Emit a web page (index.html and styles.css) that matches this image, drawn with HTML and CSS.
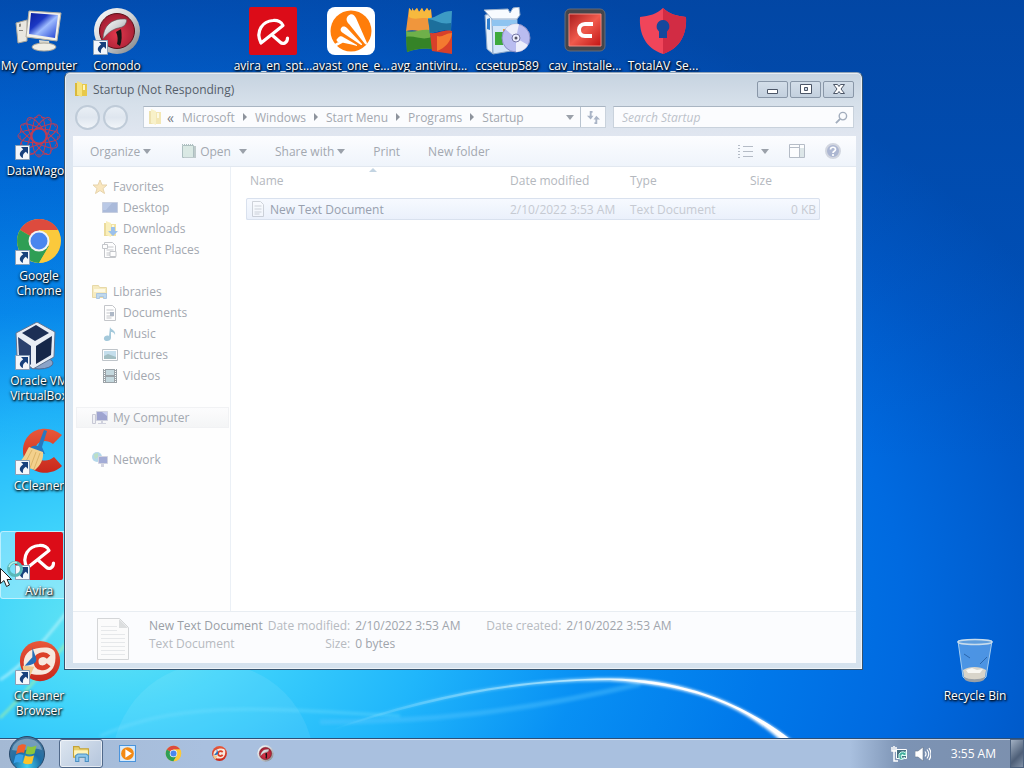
FILE: index.html
```html
<!DOCTYPE html>
<html lang="en">
  <head>
    <meta charset="utf-8">
    <title>Desktop</title>
    <link rel="stylesheet" href="styles.css">
  </head>
  <body>
    <!-- shared icons -->
    <svg class="defs" width="0" height="0" aria-hidden="true">
      <defs>
        <linearGradient id="screen" x1="0" y1="0" x2="1" y2="1">
          <stop offset="0" stop-color="#0a1f9c"/><stop offset=".35" stop-color="#1c38c4"/>
          <stop offset=".55" stop-color="#9fbcff"/><stop offset="1" stop-color="#1e3fd0"/>
        </linearGradient>
        <linearGradient id="silver" x1="0" y1="0" x2="1" y2="1">
          <stop offset="0" stop-color="#ffffff"/><stop offset=".5" stop-color="#d0d2d4"/><stop offset="1" stop-color="#777a7d"/>
        </linearGradient>
        <radialGradient id="darkred" cx=".5" cy=".6" r=".6">
          <stop offset="0" stop-color="#e0384c"/><stop offset="1" stop-color="#a01c32"/>
        </radialGradient>
        <linearGradient id="ccred" x1="0" y1="0" x2="0" y2="1">
          <stop offset="0" stop-color="#e8583a"/><stop offset="1" stop-color="#c8281c"/>
        </linearGradient>
        <radialGradient id="orb" cx=".5" cy=".85" r=".9">
          <stop offset="0" stop-color="#3fd0f4"/><stop offset=".45" stop-color="#1c6ea6"/><stop offset="1" stop-color="#4f7698"/>
        </radialGradient>
        <linearGradient id="cyanred" x1="0" y1="0" x2="1" y2="1">
          <stop offset="0" stop-color="#a81c1c"/><stop offset=".5" stop-color="#f05a4c"/><stop offset="1" stop-color="#c01414"/>
        </linearGradient>
      </defs>
      <symbol id="i-shortcut" viewBox="0 0 15 15">
        <path fill="#f4f7fb" stroke="#8aa0b8" d="M.5.5h14v14H.5z"/>
        <path fill="#17407c" d="M6 2h7v7l-2.200-2.200C8.500 8.500 7.500 10 8 13 4.500 11.500 3 8 8.200 4.200z"/>
      </symbol>
      <symbol id="i-avira" viewBox="0 0 48 48">
        <rect width="48" height="48" rx="2" fill="#dc0c18"/>
        <path fill="none" stroke="#fff" stroke-width="3.200" stroke-linecap="round" stroke-linejoin="round" d="M12 36C6 24 14 14 24 13.500c5-.500 9 2 10 5L12 36M23 28l8 7c3 3 7.500 1 7.500-4"/>
      </symbol>
      <symbol id="i-chrome" viewBox="0 0 48 48">
        <circle cx="24" cy="24" r="22" fill="#fbc93c"/>
        <path fill="#dd4b3e" d="M24 24 5 13C13-1 35-2 43 13H24z"/>
        <path fill="#2f9e55" d="M24 24 5 13C-3 27 6 44 24 46l10-17z"/>
        <path fill="#fbc93c" d="M24 46c17 0 26-18 19-33H24l10 16z"/>
        <circle cx="24" cy="24" r="10.500" fill="#f4f4f4"/>
        <circle cx="24" cy="24" r="8.500" fill="#4a86ee"/>
      </symbol>
      <symbol id="i-comodo" viewBox="0 0 48 48">
        <circle cx="24" cy="24" r="23" fill="url(#silver)"/>
        <circle cx="24" cy="24" r="17.500" fill="url(#darkred)" stroke="#5b1018"/>
        <path fill="#151515" d="M23 25l5-3c1 6 1 12-1 17l-3-2c1-4 1-8-1-12z"/>
        <path fill="url(#silver)" stroke="#555" stroke-width=".6" d="M10 32C10 19 19 11 32 12c2 0 2 2 1 4-2 5-6 4-11 6-5 2-8 5-12 10z"/>
      </symbol>
      <symbol id="i-ccbrowser" viewBox="0 0 48 48">
        <circle cx="24" cy="24" r="21" fill="url(#ccred)"/>
        <path fill="#f7e9de" d="M8 33c-3-11 1-20 12-22 9-2 19-2 20 6 1 11-3 20-13 21-9 1-16-1-19-5z"/>
        <path fill="none" stroke="#dc4028" stroke-width="5" d="M33 20c-5-5-14-2-13 5 0 7 9 8 13 3"/>
        <path fill="#266fb8" d="m16 10 4 11c1 5-3 7-12 8l8-9z"/>
        <path fill="#f0c88a" d="M6 29l12 1-5 11c-5-2-7-7-7-12z"/>
      </symbol>
      <symbol id="i-folder" viewBox="0 0 16 16">
        <path fill="#d9b93c" d="M2 2h5l1 13H2z"/>
        <path fill="#f6e27c" d="M4 0l5 2v14l-5-2z"/>
        <path fill="#e8c94a" d="M9 3h5v12H9z"/>
        <path fill="#fff6bf" d="M10 4h2v5h-2z"/>
      </symbol>
      <symbol id="i-monitor" viewBox="0 0 16 16">
        <path fill="#e9eaf2" stroke="#9a9cb4" d="M.5 4.500h3v9h-3z"/>
        <path fill="#4651a8" stroke="#a9acc4" d="M4.500 1.500h11v9h-11z"/>
        <path fill="#9aa6e8" d="M10 2h5v4z"/>
        <path fill="#a9acc4" d="M9 11h2v2h3v1H6v-1h3z"/>
      </symbol>
      <symbol id="i-page" viewBox="0 0 16 16">
        <path fill="#fff" stroke="#8b9098" d="M2.500.5h8l3 3v12h-11z"/>
        <path stroke="#8b9098" d="M4.500 5h7M4.500 8h7M4.500 11h7M4.500 13h5"/>
      </symbol>
    </svg>

    <div class="desktop">
      <svg class="wallpaper" viewBox="0 0 1024 768" preserveAspectRatio="none" aria-hidden="true">
        <defs>
          <radialGradient id="glow" gradientUnits="userSpaceOnUse" cx="0" cy="0" r="1" gradientTransform="translate(110 620) scale(1060 700)">
            <stop offset="0" stop-color="#66e6f2"/><stop offset=".13" stop-color="#40d4fb"/>
            <stop offset=".3" stop-color="#20b6fb"/><stop offset=".45" stop-color="#0890f4"/>
            <stop offset=".62" stop-color="#0078ea"/><stop offset=".75" stop-color="#006ae0"/><stop offset=".88" stop-color="#005aca"/><stop offset="1" stop-color="#0050b8"/>
          </radialGradient>
          <linearGradient id="shade" x1="0" y1="0" x2="0" y2="1">
            <stop offset="0" stop-color="#063580" stop-opacity=".35"/><stop offset=".6" stop-color="#0048a8" stop-opacity="0"/>
          </linearGradient>
          <linearGradient id="streak" gradientUnits="userSpaceOnUse" x1="330" y1="0" x2="790" y2="0">
            <stop offset="0" stop-color="#bfefff" stop-opacity="0"/><stop offset=".45" stop-color="#bfefff" stop-opacity=".6"/><stop offset=".7" stop-color="#fff"/>
          </linearGradient>
          <filter id="soft"><feGaussianBlur stdDeviation="1.500"/></filter>
        </defs>
        <rect width="1024" height="768" fill="url(#glow)"/>
        <rect width="1024" height="768" fill="url(#shade)"/>
        <circle cx="213" cy="764" r="101" fill="#fff" opacity=".08"/>
        <path fill="none" stroke="#7fe3ff" stroke-width="3" opacity=".35" filter="url(#soft)" d="M100 736C180 700 260 708 400 716"/>
        <path fill="none" stroke="#5cc8ff" stroke-width="5" opacity=".4" filter="url(#soft)" d="M320 722C430 722 520 712 640 684"/>
        <path fill="url(#streak)" filter="url(#soft)" d="M330 730C420 696 520 678 610 678 690 678 750 708 794 742L782 742C740 704 690 685 610 681 520 680 430 698 330 731z"/>
        <path fill="url(#streak)" d="M330 730C420 696 520 678.500 610 678.500 690 679 750 708 791 740L784 740C740 704 690 684 610 680 520 680 430 698 330 731z"/>
        <path fill="none" stroke="#e8ffff" stroke-width="2" opacity=".7" filter="url(#soft)" d="M0 680C25 664 45 640 70 608"/>
        <path fill="none" stroke="#b6f79a" stroke-width="2" opacity=".8" filter="url(#soft)" d="M0 718C30 690 50 660 70 640"/>
      </svg>

      <div class="icons">
        <button class="icon c1 r1">
          <svg viewBox="0 0 48 48"><path fill="#e9e7e0" stroke="#a9a59a" d="M1 16l11-3v21L3 36z"/><path fill="#8a8780" d="M4 17l2-.5v3l-2 .5zM4 23h4v1H4z"/><path fill="#f3f1ea" stroke="#b2aea2" d="M14 4l32 2-4 28-31-4z"/><path fill="url(#screen)" d="M16 6l27 2-3 23-26-4z"/><path fill="#dcd9cf" d="M24 33l10 1 1 6h-10z"/><ellipse cx="29" cy="40" rx="12" ry="4" fill="#f0eee6" stroke="#aaa69a"/></svg>
          <span>My Computer</span>
        </button>
        <button class="icon c2 r1">
          <svg viewBox="0 0 48 48"><use href="#i-comodo"/><use href="#i-shortcut" y="33" width="15" height="15"/></svg>
          <span>Comodo</span>
        </button>
        <button class="icon c4 r1">
          <svg viewBox="0 0 48 48"><use href="#i-avira"/></svg>
          <span>avira_en_spt...</span>
        </button>
        <button class="icon c5 r1">
          <svg viewBox="0 0 48 48"><rect width="48" height="48" rx="8" fill="#fff"/><circle cx="24" cy="24" r="20.500" fill="#ff7d0a"/><path fill="#fff" d="M21 9c3-3 6-2 8 2l11 25c0 1-1 2-2 1L22 17c-3-3-3-6-1-8zM15 20c2-1 4 0 5 1l15 16c0 1 0 1-1 1L16 26c-3-2-3-4-1-6zM11 31c1-2 4-2 5-1l14 8v1c-6-2-12-3-19-4-2-1-2-3 0-4zM6 38l7-4 4 1-9 5z"/></svg>
          <span>avast_one_e...</span>
        </button>
        <button class="icon c6 r1">
          <svg viewBox="0 0 48 48"><path fill="#f0963c" d="M4 1l3 3V1l2 3 3-3 2 4 3-4 2 4 3-4 2 3 2-2 1 8-3 16C14 24 8 22 1 24z"/><path fill="#f7b93e" d="M4 1l3 3V1l2 3 3-3 2 4 3-4 2 4 3-4 2 3 2-2v10C18 9 10 14 4 10z"/><path fill="#3d9bc4" d="M23 11c8 1 12-7 24-7l-1 20c-9-3-13 1-21 2z"/><path fill="#1c6f9c" d="M23 12c8 1 13 6 23 4v8c-9-3-13 1-21 2z"/><path fill="#6fb04a" d="M1 24c9 2 15-2 23-1l5 20c-8-3-18-1-27 2z"/><path fill="#358327" d="M1 30c9-2 16 4 25 0l3 13c-8-3-18-1-27 2z"/><path fill="#d8402a" d="M25 26c9 1 13-4 22-2v23l-20-3z"/><path fill="#f47a30" d="M32 29c5 2 9-3 15-3-1 9-7 15-15 18z"/></svg>
          <span>avg_antiviru...</span>
        </button>
        <button class="icon c7 r1">
          <svg viewBox="0 0 48 48"><path fill="#e8f1fb" stroke="#8aa6c8" d="M2 8l7-1 1 40-6-5z"/><path fill="#d3e6fa" stroke="#8aa6c8" d="M9 11h25v32l-24 4z"/><path fill="#f8fbff" stroke="#9ab0cc" d="M1 3l24-1 2 4 3-5 6-1 1 8-3 4H9z"/><path fill="#8fc4f0" d="M9 13h25v6H9z"/><path fill="#2f7fd0" d="M4 12l3-1v12l-3-1z"/><path fill="#3daa3c" d="M12 25h8v13h-8z"/><path fill="#f0a030" d="M20 22h6v10h-6z"/><circle cx="33" cy="31" r="14" fill="#b9bcf0" stroke="#8b8fc4"/><path fill="#fff" opacity=".75" d="M33 31L22 22c4-5 10-6 14-5zM33 31l12 7c-3 5-8 7-12 7z"/><circle cx="33" cy="31" r="4" fill="#eef" stroke="#7779a8"/><circle cx="33" cy="31" r="1.500" fill="#556"/></svg>
          <span>ccsetup589</span>
        </button>
        <button class="icon c8 r1">
          <svg viewBox="0 0 48 48"><rect x="4" y="2" width="40" height="42" rx="5" fill="#44464c" stroke="#666b76"/><path fill="url(#cyanred)" stroke="#f08a80" d="M8 7h32v32H8z"/><path fill="none" stroke="#fff" stroke-width="4" d="M32 17h-8c-4 0-6 3-6 6s2 6 6 6h7"/></svg>
          <span>cav_installe...</span>
        </button>
        <button class="icon c9 r1">
          <svg viewBox="0 0 48 48"><path fill="#f0455a" d="M24 1c6 6 14 8 23 9 1 16-5 31-23 37C6 41 0 26 1 10 10 9 18 7 24 1z"/><path fill="#d22c44" d="M24 1c6 6 14 8 23 9 1 16-5 31-23 37z"/><path fill="#16489c" d="M24 13a6.500 6.500 0 0 1 4 11.500V31h-8v-6.500A6.500 6.500 0 0 1 24 13z"/></svg>
          <span>TotalAV_Se...</span>
        </button>

        <button class="icon c1 r2">
          <svg viewBox="0 0 48 48"><g fill="none" stroke="#c03c54" stroke-width="1"><ellipse cx="24" cy="24" rx="21" ry="7"/><ellipse cx="24" cy="24" rx="21" ry="7" transform="rotate(30 24 24)"/><ellipse cx="24" cy="24" rx="21" ry="7" transform="rotate(60 24 24)"/><ellipse cx="24" cy="24" rx="21" ry="7" transform="rotate(90 24 24)"/><ellipse cx="24" cy="24" rx="21" ry="7" transform="rotate(120 24 24)"/><ellipse cx="24" cy="24" rx="21" ry="7" transform="rotate(150 24 24)"/><circle cx="24" cy="24" r="8"/><circle cx="24" cy="24" r="19" stroke-dasharray="4 3"/></g><use href="#i-shortcut" y="33" width="15" height="15"/></svg>
          <span>DataWagon</span>
        </button>
        <button class="icon c1 r3">
          <svg viewBox="0 0 48 48"><use href="#i-chrome"/><use href="#i-shortcut" y="33" width="15" height="15"/></svg>
          <span>Google<br>Chrome</span>
        </button>
        <button class="icon c1 r4">
          <svg viewBox="0 0 48 48"><ellipse cx="24" cy="41" rx="14" ry="6" fill="#8ba3c8" stroke="#4f6a94"/><path fill="#e8edf5" stroke="#5e7392" d="M1 11L22 0l18 10-1 25-21 12L2 34z"/><path fill="#1d2f55" d="M7 11l14-8 13 8-14 8z"/><path fill="#2a416e" d="M3 15l13 9v19L4 33z"/><path fill="#162749" d="M21 24l16-10-1 19-15 9z"/><use href="#i-shortcut" y="33" width="15" height="15"/></svg>
          <span>Oracle VM<br>VirtualBox</span>
        </button>
        <button class="icon c1 r5">
          <svg viewBox="0 0 48 48"><path fill="url(#ccred)" d="M47 8C31-5 8 3 8 24c0 20 24 29 39 15l-8-9c-8 7-19 3-19-6 0-10 11-13 18-7z"/><path fill="#2878c0" d="M29 3l3 1-5 16 3 7-15-4c0-4 4-5 8-4z"/><path fill="#f3d08c" d="M14 20l14 5c1 7-3 14-8 18L2 37c6-4 8-10 12-17z"/><path stroke="#dcb468" fill="none" d="M17 23l-8 15M21 25l-6 16M25 26l-6 16"/><use href="#i-shortcut" y="33" width="15" height="15"/></svg>
          <span>CCleaner</span>
        </button>
        <button class="icon selected c1 r6">
          <svg viewBox="0 0 48 48"><use href="#i-avira"/><use href="#i-shortcut" y="33" width="15" height="15"/></svg>
          <span>Avira</span>
        </button>
        <button class="icon c1 r7">
          <svg viewBox="0 0 48 48"><use href="#i-ccbrowser" x="2" width="46" height="48"/><use href="#i-shortcut" y="33" width="15" height="15"/></svg>
          <span>CCleaner<br>Browser</span>
        </button>
        <button class="icon c13 r7">
          <svg viewBox="0 0 48 48"><path fill="#a8d2f6" fill-opacity=".45" stroke="#a4cdf0" d="M7 4l5 36c3 5 20 5 23 0l6-36z"/><path fill="#d8d4ca" d="M12 33c6-4 17-4 23 0l-1 7c-4 4-17 4-21 0z"/><path fill="#f7f6f2" d="M15 33l6-2 5 2 6-1-3 4H17z"/><path fill="#9aa0a6" d="M13 40c5 3 16 3 21 0l-1 3c-5 3-14 3-19 0z"/><path stroke="#2a66ac" fill="none" d="M29 27l7-7M13 17l6 4"/><ellipse cx="24" cy="5" rx="17" ry="2.500" fill="#5f9ede" stroke="#c8dcec" stroke-width="1.500"/></svg>
          <span>Recycle Bin</span>
        </button>
      </div>

      <section class="window">
        <header class="titlebar">
          <svg class="i16" viewBox="0 0 16 16"><use href="#i-folder"/></svg>
          <h1>Startup (Not Responding)</h1>
          <div class="caption">
            <button aria-label="Minimize"><svg viewBox="0 0 14 12"><path fill="#fff" stroke="#4b5566" d="M1.500 6.500h10v4h-10z"/></svg></button>
            <button aria-label="Maximize"><svg viewBox="0 0 14 12"><path fill="#fff" stroke="#4b5566" fill-rule="evenodd" d="M1.500 1.500h11v9h-11zM5.500 4.500v3h3v-3z"/></svg></button>
            <button aria-label="Close"><svg viewBox="0 0 14 12"><path fill="#fff" stroke="#4b5566" d="M1.500 1.500h4L7 3.500l1.500-2h4L9 6l3.500 4.500h-4L7 8.500l-1.500 2h-4L5 6z"/></svg></button>
          </div>
        </header>

        <nav class="navbar">
          <button class="round" aria-label="Back"></button>
          <button class="round" aria-label="Forward"></button>
          <div class="address">
            <svg class="i16 faded" viewBox="0 0 16 16"><use href="#i-folder"/></svg>
            <span class="more">«</span>
            <a href="#">Microsoft</a><i class="tri"></i>
            <a href="#">Windows</a><i class="tri"></i>
            <a href="#">Start Menu</a><i class="tri"></i>
            <a href="#">Programs</a><i class="tri"></i>
            <a href="#">Startup</a>
            <button class="history" aria-label="Previous locations"><i class="down"></i></button>
            <button class="refresh" aria-label="Refresh"><svg viewBox="0 0 16 16"><path fill="none" stroke="#a9b4c6" stroke-width="2" d="M7 2H5v5M9 14h2V9"/><path fill="#a9b4c6" d="M1 6h7l-3 4zM8 10h7l-4-4z"/></svg></button>
          </div>
          <div class="search">
            <input type="text" placeholder="Search Startup" aria-label="Search Startup">
            <svg viewBox="0 0 14 14"><circle cx="8.500" cy="5.500" r="4" fill="none" stroke="#a2adbd" stroke-width="1.500"/><path stroke="#a2adbd" stroke-width="2" d="M5.500 8.500L1 13"/></svg>
          </div>
        </nav>

        <div class="client">
          <div class="toolbar">
            <button class="t-organize">Organize <i class="down"></i></button>
            <button class="t-open"><svg viewBox="0 0 16 16"><path fill="#cfe3da" stroke="#8fa8a8" d="M1.500 2.500h11v12h-11z"/><path stroke="#8fa8a8" stroke-dasharray="1 1" d="M1 1.500h12"/><path fill="#a9b8b8" d="M13 3h2v12H3v-1h10z"/></svg> Open <i class="down"></i></button>
            <button class="t-share">Share with <i class="down"></i></button>
            <button class="t-print">Print</button>
            <button>New folder</button>
            <div class="tools">
              <button aria-label="Change your view"><svg viewBox="0 0 16 16"><path stroke="#9aa3b0" stroke-dasharray="2 1" d="M1 2.500h3M1 5.500h3M1 8.500h3M1 11.500h3M1 14.500h3"/><path stroke="#9aa3b0" d="M6 3.500h10M6 8.500h10M6 13.500h10"/></svg> <i class="down"></i></button>
              <button aria-label="Show the preview pane"><svg viewBox="0 0 16 16"><path fill="#fff" stroke="#9aa3b0" d="M.5 1.500h15v13H.5zM.5 4.500h10M10.500 2v12"/><path fill="#d3dfe0" d="M11 5h4v9h-4z"/></svg></button>
              <button aria-label="Get help"><svg viewBox="0 0 16 16"><circle cx="8" cy="8" r="7" fill="#8f9cc0" stroke="#c3c8d4" stroke-width="2"/><path fill="none" stroke="#fff" stroke-width="1.700" d="M5.500 6.500c0-3 5-3 5 0 0 2-2.500 1.500-2.500 3.500M8 11v2"/></svg></button>
            </div>
          </div>

          <div class="panes">
            <aside class="sidebar">
              <ul>
                <li><a href="#"><svg viewBox="0 0 16 16"><path fill="#f6d080" stroke="#cfa95a" d="M8 1l2 5h5l-4 3.500 1.500 5L8 11.500l-4.500 3 1.500-5L1 6h5z"/></svg>Favorites</a></li>
                <li class="sub"><a href="#"><svg viewBox="0 0 16 16"><path fill="#5878b8" stroke="#8fa0c4" d="M.5 2.500h15v10H.5z"/><path fill="#7896d0" d="M1 3h9L4 10H1z"/></svg>Desktop</a></li>
                <li class="sub"><a href="#"><svg viewBox="0 0 16 16"><use href="#i-folder"/><path fill="#3b86dc" d="M9 6h4v4h3l-5 5-5-5h3z"/></svg>Downloads</a></li>
                <li class="sub"><a href="#"><svg viewBox="0 0 16 16"><use href="#i-page"/><path fill="#fff" stroke="#8b9098" d="M.5 2.500h5v4h-5zM8 9.500h6v5H8z"/></svg>Recent Places</a></li>
              </ul>
              <ul>
                <li><a href="#"><svg viewBox="0 0 16 16"><path fill="#efd983" stroke="#d2b655" d="M.5 1.500h6l1 2h7v10H.5z"/><path fill="#fff6c8" d="M2 5h11v3H2z"/><path fill="#7fb4e0" stroke="#5a8fc4" d="M4.500 14.500v-5h10v5h-3v-2h-4v2z"/></svg>Libraries</a></li>
                <li class="sub"><a href="#"><svg viewBox="0 0 16 16"><use href="#i-page"/><path fill="#607490" d="M8 7h4v4H8z"/></svg>Documents</a></li>
                <li class="sub"><a href="#"><svg viewBox="0 0 16 16"><path fill="#4a94b8" d="M8 1c1 3 6 3 5 8-1-3-3-3-4-3v6c0 4-8 4-7 0 0-2 3-3 5-2z"/></svg>Music</a></li>
                <li class="sub"><a href="#"><svg viewBox="0 0 16 16"><path fill="#fff" stroke="#7f8c96" d="M.5 2.500h15v11H.5z"/><path fill="#8cc0dc" d="M2 4h12v8H2z"/><path fill="#488088" d="M2 12V9l4-2 8 3v2z"/></svg>Pictures</a></li>
                <li class="sub"><a href="#"><svg viewBox="0 0 16 16"><path fill="#3b4a54" d="M1 1h14v14H1z"/><path stroke="#fff" stroke-width="1" stroke-dasharray="1 1" d="M2.500 1v14M13.500 1v14"/><path fill="#8cb4c0" d="M4 2h8v5H4zM4 9h8v5H4z"/></svg>Videos</a></li>
              </ul>
              <ul>
                <li class="current"><a href="#"><svg viewBox="0 0 16 16"><use href="#i-monitor"/></svg>My Computer</a></li>
              </ul>
              <ul>
                <li><a href="#"><svg viewBox="0 0 16 16"><circle cx="5" cy="5" r="5" fill="#6fb4d8"/><path fill="#7cc48c" d="M2 2l4-1v4L3 7z"/><path fill="#4a5cb0" stroke="#a9acc4" d="M6.500 4.500h9v7h-9z"/><path fill="#a9acc4" d="M9 12h3v3H9z"/></svg>Network</a></li>
              </ul>
            </aside>

            <main class="files">
              <table>
                <colgroup><col class="w-name"><col class="w-mid"><col class="w-mid"><col class="w-size"></colgroup>
                <thead>
                  <tr><th class="sorted">Name</th><th>Date modified</th><th>Type</th><th>Size</th></tr>
                </thead>
                <tbody>
                  <tr>
                    <td class="name"><svg viewBox="0 0 16 16"><use href="#i-page"/></svg>New Text Document</td>
                    <td>2/10/2022 3:53 AM</td>
                    <td>Text Document</td>
                    <td class="size">0 KB</td>
                  </tr>
                </tbody>
              </table>
            </main>
          </div>

          <footer class="details">
            <svg viewBox="0 0 32 42"><path fill="#fbfbfb" stroke="#d4d6d8" d="M.5.500h22l9 9v32H.5z"/><path fill="#dcdedf" d="M22 1v9h9z"/><path stroke="#e6e8ea" d="M4 8.500h16M4 12.500h16M4 16.500h24M4 20.500h24M4 24.500h24M4 28.500h24M4 32.500h24M4 36.500h24"/></svg>
            <div class="props">
              <strong>New Text Document</strong>
              <span class="key">Date modified:</span><span class="value">2/10/2022 3:53 AM</span>
              <span class="key">Date created:</span><span class="value">2/10/2022 3:53 AM</span>
              <span>Text Document</span>
              <span class="key">Size:</span><span class="value">0 bytes</span>
            </div>
          </footer>
        </div>
      </section>

      <footer class="taskbar">
        <button class="start" aria-label="Start">
          <svg viewBox="0 0 38 38"><circle cx="19" cy="19" r="17.500" fill="url(#orb)" stroke="#26486a"/><path fill="#fff" opacity=".3" d="M4 15C7 0 31 0 34 15c-10-4-20 3-30 0z"/><path fill="#f0602c" d="M10 11c3-2 6-2 8-1l-2 8c-3-1-5 0-8 1z"/><path fill="#8cc63c" d="M19.500 11c3 1.500 6 1 9-.500l-2 8c-3 1-6 1.500-9 0z"/><path fill="#38a0e8" d="M7.500 20.500c3-1.500 5-1.500 8-.500l-2 8c-3-1-5-1-8 .500z"/><path fill="#fcc42c" d="M17 20.500c3 1.500 6 1 9 0l-2 8c-3 1-6 1-9-.500z"/></svg>
        </button>
        <button class="task active" aria-label="Windows Explorer"><svg viewBox="0 0 16 16"><path fill="#e8cf6a" stroke="#c4a238" d="M.5 1.500h5l1 2h8v8H.5z"/><path fill="#fff4b8" d="M1 5h13v5H1z"/><path fill="#8cc8ee" stroke="#4c90c4" d="M2.500 15.500V10l2-1.500h8l2 1.500v5.500h-3v-4h-6v4z"/></svg></button>
        <button class="task" aria-label="Windows Media Player"><svg viewBox="0 0 16 16"><path fill="#d8ebfc" stroke="#4a94dc" d="M.5.500h15v15H.5z"/><circle cx="8" cy="8" r="6" fill="#f48a14"/><path fill="#fff" d="M6 4l6 4-6 4z"/></svg></button>
        <button class="task" aria-label="Google Chrome"><svg viewBox="0 0 48 48"><use href="#i-chrome"/></svg></button>
        <button class="task" aria-label="CCleaner Browser"><svg viewBox="0 0 48 48"><use href="#i-ccbrowser"/></svg></button>
        <button class="task" aria-label="Comodo"><svg viewBox="0 0 48 48"><use href="#i-comodo"/></svg></button>
        <div class="tray">
          <button aria-label="Network"><svg viewBox="0 0 16 16"><path fill="#456f80" stroke="#fff" d="M5.500 3.500h10v9h-10z"/><path fill="none" stroke="#fff" stroke-width="1.500" d="M1 1v4h4V1M3 0v15h4"/><path fill="#3fae9c" stroke="#d8fff4" d="M8 8.500a4 4 0 0 1 6-2l1-1v4h-4l1-1-2 1 1 3 3-1a4 4 0 0 1-6 1z"/></svg></button>
          <button aria-label="Volume"><svg viewBox="0 0 16 16"><path fill="#fff" stroke="#65758c" stroke-width=".6" d="M0 5h3l5-4v14l-5-4H0z"/><path fill="none" stroke="#fff" stroke-width="1.200" d="M10 5.500q2 2.500 0 5M12 3.500q3.500 4.500 0 9M14 2q4 6 0 12"/></svg></button>
          <time>3:55 AM</time>
          <button class="peek" aria-label="Show desktop"></button>
        </div>
      </footer>

      <svg class="cursor" viewBox="0 0 24 30" aria-hidden="true">
        <circle cx="15" cy="10" r="6.500" fill="none" stroke="#58b8b8" stroke-width="3"/>
        <path fill="none" stroke="#b6efe8" stroke-width="1.500" d="M9 8a6.500 6.500 0 0 1 8-4.500"/>
        <path fill="#fff" stroke="#222" d="M.5 9.500v15l3.500-3 2.500 6 3-1.500-2.500-5.500h4.500z"/>
      </svg>
    </div>
  </body>
</html>
```
FILE: styles.css
```css
* {
  margin: 0;
  padding: 0;
  box-sizing: border-box;
}

body {
  font-family: "Open Sans", "Noto Sans", sans-serif;
  font-size: 12px;
  line-height: 15px;
}

button, input {
  font: inherit;
  color: inherit;
  background: none;
  border: none;
}

a {
  color: inherit;
  text-decoration: none;
}

ul {
  list-style: none;
}

svg {
  display: block;
  flex: none;
}

.defs {
  position: absolute;
}

.desktop {
  position: relative;
  height: 100vh;
  overflow: hidden;
  background: #0068d8;
}

.wallpaper {
  position: absolute;
  width: 100%;
  height: 100%;
}

/* desktop icons */
.icons {
  position: absolute;
  top: 6px;
  left: 0;
  display: grid;
  grid-template-columns: repeat(13, 78px);
  grid-template-rows: repeat(7, 105px);
  align-items: start;
}

.icon {
  display: flex;
  flex-direction: column;
  align-items: center;
  gap: 3px;
  border: 1px solid transparent;
  border-radius: 3px;
  color: #fff;
  text-shadow: 1px 1px 2px #000, 0 1px 3px #000;
}

.icon svg {
  width: 48px;
  height: 48px;
}

.icon span {
  text-align: center;
  white-space: nowrap;
}

.icon.selected {
  background: rgba(255, 255, 255, 0.3);
  border-color: rgba(255, 255, 255, 0.5);
}

.c1 { grid-column: 1; }
.c2 { grid-column: 2; }
.c4 { grid-column: 4; }
.c5 { grid-column: 5; }
.c6 { grid-column: 6; }
.c7 { grid-column: 7; }
.c8 { grid-column: 8; }
.c9 { grid-column: 9; }
.c13 { grid-column: 13; }
.r1 { grid-row: 1; }
.r2 { grid-row: 2; }
.r3 { grid-row: 3; }
.r4 { grid-row: 4; }
.r5 { grid-row: 5; }
.r6 { grid-row: 6; }
.r7 { grid-row: 7; }

/* explorer window */
.window {
  position: absolute;
  left: 64px;
  right: 161px;
  top: 72px;
  bottom: 98px;
  display: flex;
  flex-direction: column;
  padding: 0 6px 6px 8px;
  border: 1px solid #35536f;
  border-top-color: #8fa3b8;
  border-radius: 6px 6px 0 0;
  background: linear-gradient(#c6d3e0, #d6e0ea 30px, #e0e6f0 62px, #dbe7f2 120px, #d5e2ee);
  box-shadow: inset 0 0 0 1px rgba(255, 255, 255, 0.6);
  color: #a3a8b0;
}

.titlebar {
  display: flex;
  align-items: center;
  height: 32px;
  gap: 4px;
}

.titlebar h1 {
  flex: 1;
  font-size: 12px;
  font-weight: normal;
  color: #555e6a;
}

.i16 {
  width: 16px;
  height: 16px;
}

.faded {
  opacity: 0.4;
}

.caption {
  display: flex;
  gap: 2px;
  padding-right: 2px;
}

.caption button {
  display: flex;
  align-items: center;
  justify-content: center;
  width: 31px;
  height: 17px;
  border: 1px solid #8997a8;
  border-radius: 2px;
  background: linear-gradient(#d3dee9, #c3d0de);
}

.caption svg {
  width: 14px;
  height: 12px;
}

.navbar {
  display: flex;
  align-items: center;
  gap: 3px;
  height: 24px;
  padding: 0 2px;
}

.round {
  width: 25px;
  height: 25px;
  border: 2px solid #bfcbd8;
  border-radius: 50%;
  background: linear-gradient(#e9eff5, #dfe6ef 50%, #f1f5f9);
}

.address {
  display: flex;
  align-items: center;
  flex: 1;
  height: 22px;
  margin-left: 12px;
  padding-left: 3px;
  border: 1px solid #c9d2dc;
  border-top-color: #a9b5c2;
  background: #fbfcfe;
}

.more {
  padding: 0 8px 0 4px;
  font-size: 14px;
  color: #777d86;
}

.tri {
  margin: 0 8px;
  border: solid transparent;
  border-width: 4px 0 4px 4px;
  border-left-color: #8d939c;
}

.down {
  display: inline-block;
  border: solid transparent;
  border-width: 5px 4px 0;
  border-top-color: #9ba1aa;
}

.history {
  display: flex;
  align-items: center;
  justify-content: center;
  margin-left: auto;
  width: 20px;
  height: 100%;
}

.refresh {
  display: flex;
  align-items: center;
  justify-content: center;
  width: 25px;
  height: 100%;
  border-left: 1px solid #b9c4d0;
}

.refresh svg {
  width: 15px;
  height: 15px;
}

.search {
  display: flex;
  align-items: center;
  width: 241px;
  height: 22px;
  margin-left: 4px;
  padding: 0 5px 0 8px;
  border: 1px solid #c9d2dc;
  border-top-color: #a9b5c2;
  background: #fbfcfe;
}

.search input {
  flex: 1;
  min-width: 0;
  outline: none;
}

.search input::placeholder {
  font-style: italic;
  color: #bcc2ca;
}

.search svg {
  width: 13px;
  height: 13px;
}

.client {
  display: flex;
  flex-direction: column;
  flex: 1;
  min-height: 0;
  margin-top: 7px;
  background: #fff;
}

.toolbar {
  display: flex;
  align-items: center;
  height: 31px;
  padding: 0 15px 0 17px;
  border-bottom: 1px solid #e2e8f0;
  background: linear-gradient(#fcfdff, #eff4fb);
}

.toolbar button {
  display: flex;
  align-items: center;
  gap: 3px;
}

.toolbar svg {
  width: 16px;
  height: 16px;
  opacity: 0.7;
}

.t-organize {
  margin-right: 30px;
}

.t-open, .t-share, .t-print {
  margin-right: 28px;
}

.toolbar .t-open .down,
.tools .down {
  margin-left: 5px;
}

.tools {
  display: flex;
  gap: 20px;
  margin-left: auto;
}

.panes {
  display: flex;
  flex: 1;
  min-height: 0;
}

.sidebar {
  width: 158px;
  padding: 9px 1px 0 3px;
  border-right: 1px solid #ebf0f6;
  background: #fefefe;
}

.sidebar ul {
  padding-bottom: 21px;
}

.sidebar li {
  height: 21px;
  padding-left: 15px;
  border: 1px solid transparent;
}

.sidebar .sub {
  padding-left: 25px;
}

.sidebar a {
  display: flex;
  align-items: center;
  gap: 5px;
  height: 19px;
}

.sidebar svg {
  width: 16px;
  height: 16px;
  opacity: 0.5;
}

.sidebar .current {
  border-color: #f1f2f4;
  background: linear-gradient(#fcfcfd, #f4f5f6);
}

.files {
  flex: 1;
  padding-left: 15px;
}

table {
  width: 574px;
  table-layout: fixed;
  border-spacing: 0;
}

.w-name { width: 260px; }
.w-mid { width: 120px; }
.w-size { width: 74px; }

th {
  position: relative;
  height: 27px;
  padding: 0 4px;
  font-weight: normal;
  text-align: left;
  color: #b4b8be;
}

.sorted::before {
  content: "";
  position: absolute;
  left: 123px;
  top: 1px;
  border: solid transparent;
  border-width: 0 4px 4px;
  border-bottom-color: #c3d4e2;
}

tbody::before {
  content: "";
  display: block;
  height: 4px;
}

tbody tr {
  outline: 1px solid #d9e1ee;
  outline-offset: -1px;
  border-radius: 2px;
  background: linear-gradient(#f7faff, #eaf0fb);
}

td {
  height: 22px;
  padding: 0 4px;
  color: #c6cad2;
}

.name {
  display: flex;
  align-items: center;
  gap: 4px;
  color: #98a0ae;
}

.name svg {
  width: 16px;
  height: 16px;
  opacity: 0.35;
}

.size {
  text-align: right;
}

.details {
  display: flex;
  align-items: flex-start;
  gap: 20px;
  height: 52px;
  padding: 6px 24px;
  border-top: 1px solid #e8edf2;
  background: #fbfcfe;
}

.details > svg {
  width: 32px;
  height: 42px;
}

.props {
  display: grid;
  grid-template-columns: auto auto 126px auto auto;
  grid-auto-rows: 18px;
  column-gap: 5px;
  color: #b6bac0;
}

.props strong {
  font-weight: normal;
  color: #9a9fa6;
}

.key {
  text-align: right;
}

.value {
  color: #a0a5ac;
}

/* taskbar */
.taskbar {
  position: absolute;
  left: 0;
  right: 0;
  bottom: 0;
  display: flex;
  align-items: center;
  height: 30px;
  border-top: 1px solid #2c4f78;
  background: linear-gradient(90deg, #a4b9d4, #a9c0df 20%, #a9c0df 83%, #7c93b4 88%, #7c90ae);
  box-shadow: inset 0 1px 0 rgba(255, 255, 255, 0.55);
}

.start {
  width: 38px;
  height: 38px;
  margin: 0 13px 0 8px;
}

.task {
  display: flex;
  align-items: center;
  justify-content: center;
  width: 44px;
  height: 29px;
  margin-right: 2px;
  border-radius: 3px;
}

.task svg {
  width: 17px;
  height: 17px;
}

.task.active {
  border: 1px solid #50698a;
  background: linear-gradient(135deg, #dde6f0, #b4c5dc);
  box-shadow: inset 0 0 0 1px rgba(255, 255, 255, 0.6);
}

.tray {
  display: flex;
  align-items: center;
  gap: 8px;
  height: 100%;
  margin-left: auto;
  color: #fff;
}

.tray svg {
  width: 16px;
  height: 16px;
}

.tray time {
  margin: 0 6px 0 12px;
}

.peek {
  width: 14px;
  height: 100%;
  border: 1px solid #4c617e;
  background: linear-gradient(135deg, #a3b1c4, #4e5f78 60%, #8292a8);
}

.cursor {
  position: absolute;
  left: 0;
  top: 559px;
  width: 24px;
  height: 30px;
}
```
